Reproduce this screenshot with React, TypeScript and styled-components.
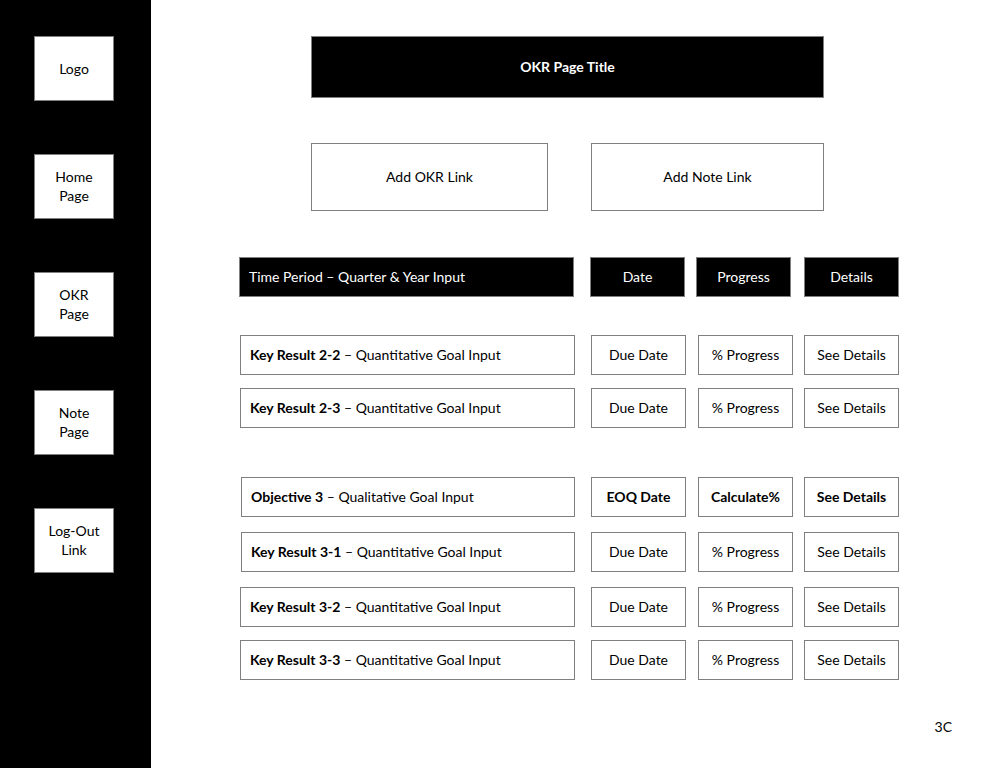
import React from "react";
import styled, { createGlobalStyle } from "styled-components";

const Global = createGlobalStyle`
  html, body { margin: 0; padding: 0; background: #fff; }
  body { font-family: "Lato", "Open Sans", "Liberation Sans", sans-serif; color: #000; }
  * { box-sizing: border-box; }
`;

const Page = styled.div`
  width: 998px;
  height: 768px;
  display: flex;
  overflow: hidden;
  background: #fff;
`;

const Sidebar = styled.nav`
  width: 151px;
  flex: 0 0 151px;
  background: #000;
  display: flex;
  flex-direction: column;
  align-items: flex-start;
  padding: 36px 0 0 34px;
  gap: 53px;
`;

const NavBox = styled.div`
  width: 80px;
  height: 65px;
  background: #fff;
  border: 1px solid #7f7f7f;
  display: flex;
  align-items: center;
  justify-content: center;
  text-align: center;
  font-size: 14px;
  line-height: 19px;
  padding-bottom: 1px;
`;

const Main = styled.main`
  flex: 1;
  display: flex;
  flex-direction: column;
  padding-top: 36px;
`;

const TitleBar = styled.div`
  margin-left: 160px;
  width: 513px;
  height: 62px;
  background: #000;
  border: 1px solid #7f7f7f;
  color: #fff;
  font-weight: 700;
  font-size: 14px;
  display: flex;
  align-items: center;
  justify-content: center;
  padding-bottom: 2px;
`;

const LinkRow = styled.div`
  margin-top: 45px;
  margin-left: 160px;
  display: flex;
  gap: 43px;
`;

const LinkBox = styled.div<{ $w: number }>`
  width: ${(p) => p.$w}px;
  height: 68px;
  border: 1px solid #7f7f7f;
  display: flex;
  align-items: center;
  justify-content: center;
  font-size: 14px;
  padding-bottom: 2px;
`;

const Row = styled.div<{ $top: number; $indent: number }>`
  margin-top: ${(p) => p.$top}px;
  margin-left: ${(p) => p.$indent}px;
  display: flex;
  height: 40px;
`;

const Cell = styled.div<{ $dark?: boolean; $w: number; $gap?: number; $align?: "left" | "center"; $bold?: boolean }>`
  width: ${(p) => p.$w}px;
  flex: 0 0 ${(p) => p.$w}px;
  margin-left: ${(p) => p.$gap ?? 0}px;
  background: ${(p) => (p.$dark ? "#000" : "#fff")};
  color: ${(p) => (p.$dark ? "#fff" : "#000")};
  border: 1px solid #7f7f7f;
  display: flex;
  align-items: center;
  justify-content: ${(p) => (p.$align === "left" ? "flex-start" : "center")};
  padding: ${(p) => (p.$align === "left" ? "0 9px 2px" : "0 0 2px")};
  font-size: 14px;
  font-weight: ${(p) => (p.$bold ? 700 : 400)};
  white-space: nowrap;
`;

const Strong = styled.b`
  font-weight: 700;
`;

const PageNum = styled.div`
  align-self: flex-end;
  margin-top: 38px;
  margin-right: 46px;
  font-size: 14px;
`;

type RowData = {
  top: number;
  label: string;
  desc: string;
  indent: number;
  date: string;
  progress: string;
  details: string;
  bold?: boolean;
};

const rows: RowData[] = [
  { top: 38, label: "Key Result 2-2", desc: "Quantitative Goal Input", indent: 89, date: "Due Date", progress: "% Progress", details: "See Details" },
  { top: 13, label: "Key Result 2-3", desc: "Quantitative Goal Input", indent: 89, date: "Due Date", progress: "% Progress", details: "See Details" },
  { top: 49, label: "Objective 3", desc: "Qualitative  Goal Input", indent: 90, date: "EOQ Date", progress: "Calculate%", details: "See Details", bold: true },
  { top: 15, label: "Key Result 3-1", desc: "Quantitative Goal Input", indent: 90, date: "Due Date", progress: "% Progress", details: "See Details" },
  { top: 15, label: "Key Result 3-2", desc: "Quantitative Goal Input", indent: 89, date: "Due Date", progress: "% Progress", details: "See Details" },
  { top: 13, label: "Key Result 3-3", desc: "Quantitative Goal Input", indent: 89, date: "Due Date", progress: "% Progress", details: "See Details" },
];

export default function App() {
  return (
    <>
      <Global />
      <Page>
        <Sidebar>
          <NavBox>Logo</NavBox>
          <NavBox>Home<br />Page</NavBox>
          <NavBox>OKR<br />Page</NavBox>
          <NavBox>Note<br />Page</NavBox>
          <NavBox>Log-Out<br />Link</NavBox>
        </Sidebar>
        <Main>
          <TitleBar>OKR Page Title</TitleBar>
          <LinkRow>
            <LinkBox $w={237}>Add OKR Link</LinkBox>
            <LinkBox $w={233}>Add Note Link</LinkBox>
          </LinkRow>
          <Row $top={46} $indent={88}>
            <Cell $dark $w={335} $align="left">Time Period – Quarter &amp; Year Input</Cell>
            <Cell $dark $w={95} $gap={16}>Date</Cell>
            <Cell $dark $w={95} $gap={11}>Progress</Cell>
            <Cell $dark $w={95} $gap={13}>Details</Cell>
          </Row>
          {rows.map((r, i) => (
            <Row key={i} $top={r.top} $indent={r.indent}>
              <Cell $w={r.indent === 90 ? 334 : 335} $align="left">
                <Strong>{r.label}</Strong>&nbsp;– {r.desc}
              </Cell>
              <Cell $w={95} $gap={16} $bold={r.bold}>{r.date}</Cell>
              <Cell $w={95} $gap={12} $bold={r.bold}>{r.progress}</Cell>
              <Cell $w={95} $gap={11} $bold={r.bold}>{r.details}</Cell>
            </Row>
          ))}
          <PageNum>3C</PageNum>
        </Main>
      </Page>
    </>
  );
}
